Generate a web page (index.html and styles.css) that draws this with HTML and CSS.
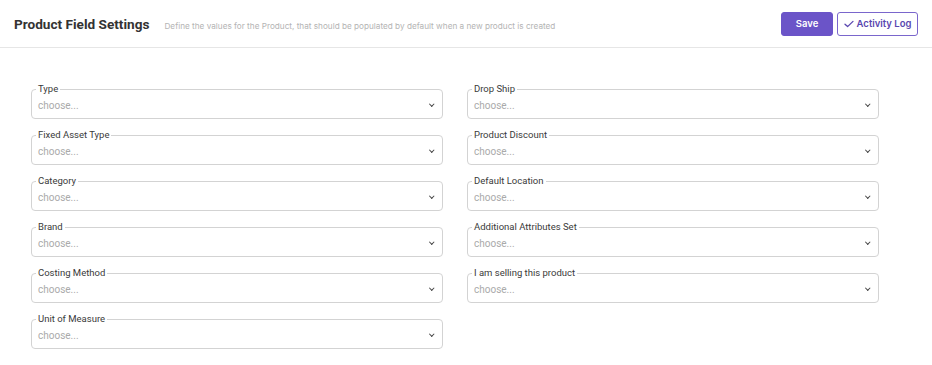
FILE: index.html
```html
<!DOCTYPE html>
<html>
<head>
<meta charset="utf-8">
<link rel="stylesheet" href="styles.css">
</head>
<body>
<header class="topbar">
  <div class="titles">
    <h1 class="title">Product Field Settings</h1>
    <span class="subtitle">Define the values for the Product, that should be populated by default when a new product is created</span>
  </div>
  <div class="actions">
    <button class="btn btn-primary">Save</button>
    <button class="btn btn-outline"><svg class="check" width="10" height="8" viewBox="0 0 10 8"><path d="M1 4.2 L3.6 6.6 L9 1.4" fill="none" stroke="currentColor" stroke-width="1.3" stroke-linecap="round" stroke-linejoin="round"/></svg>Activity Log</button>
  </div>
</header>
<main class="form">
  <div class="col">
    <fieldset class="field"><legend>Type</legend><div class="select"><span class="ph">choose...</span><span class="chev"></span></div></fieldset>
    <fieldset class="field"><legend>Fixed Asset Type</legend><div class="select"><span class="ph">choose...</span><span class="chev"></span></div></fieldset>
    <fieldset class="field"><legend>Category</legend><div class="select"><span class="ph">choose...</span><span class="chev"></span></div></fieldset>
    <fieldset class="field"><legend>Brand</legend><div class="select"><span class="ph">choose...</span><span class="chev"></span></div></fieldset>
    <fieldset class="field"><legend>Costing Method</legend><div class="select"><span class="ph">choose...</span><span class="chev"></span></div></fieldset>
    <fieldset class="field"><legend>Unit of Measure</legend><div class="select"><span class="ph">choose...</span><span class="chev"></span></div></fieldset>
  </div>
  <div class="col">
    <fieldset class="field"><legend>Drop Ship</legend><div class="select"><span class="ph">choose...</span><span class="chev"></span></div></fieldset>
    <fieldset class="field"><legend>Product Discount</legend><div class="select"><span class="ph">choose...</span><span class="chev"></span></div></fieldset>
    <fieldset class="field"><legend>Default Location</legend><div class="select"><span class="ph">choose...</span><span class="chev"></span></div></fieldset>
    <fieldset class="field"><legend>Additional Attributes Set</legend><div class="select"><span class="ph">choose...</span><span class="chev"></span></div></fieldset>
    <fieldset class="field"><legend>I am selling this product</legend><div class="select"><span class="ph">choose...</span><span class="chev"></span></div></fieldset>
  </div>
</main>
</body>
</html>
```

FILE: styles.css
```css
* { box-sizing: border-box; }
html, body { margin: 0; padding: 0; background: #fff; }
body { font-family: Roboto, "Noto Sans", sans-serif; color: #333; }

.topbar {
  height: 48px;
  border-bottom: 1px solid #e6e6e6;
  display: flex;
  align-items: center;
  justify-content: space-between;
  padding: 0 14px 0 14px;
}
.titles { display: flex; align-items: baseline; gap: 15px; }
.title {
  margin: 0;
  font-family: Roboto, sans-serif;
  font-size: 13.6px;
  font-weight: 700;
  color: #333;
}
.subtitle {
  font-family: Inter, sans-serif;
  font-size: 8.2px;
  color: #b4b4b4;
}
.actions { display: flex; gap: 4px; }
.btn {
  height: 24px;
  border-radius: 3px;
  font-family: Inter, sans-serif;
  font-size: 9.5px;
  font-weight: 600;
  display: flex;
  align-items: center;
  justify-content: center;
  white-space: nowrap;
  padding: 0;
  cursor: pointer;
}
.btn-primary {
  width: 52px;
  background: #6b54c8;
  border: 1px solid #6b54c8;
  color: #fff;
}
.btn-outline {
  width: 81px;
  background: #fff;
  border: 1px solid #7a66cc;
  color: #5a46b0;
  gap: 3px;
}
.check { display: block; }

.form {
  display: grid;
  grid-template-columns: 412px 412px;
  column-gap: 24px;
  padding: 35px 0 0 31px;
}
.col { display: flex; flex-direction: column; gap: 10px; }
.field {
  margin: 0;
  padding: 0 9px 3px 4px;
  border: 1px solid #d3d3d3;
  border-radius: 4px;
  min-width: 0;
}
.field legend {
  font-size: 9.5px;
  line-height: 12px;
  color: #3a3a3a;
  padding: 0 2px;
}
.select {
  height: 20px;
  display: flex;
  align-items: center;
  justify-content: space-between;
  padding-left: 2px;
}
.ph { font-size: 10px; color: #aaa; }
.chev {
  width: 3.5px;
  height: 3.5px;
  border-right: 1.4px solid #444;
  border-bottom: 1.4px solid #444;
  transform: rotate(45deg);
  margin-top: -2px;
}
```
